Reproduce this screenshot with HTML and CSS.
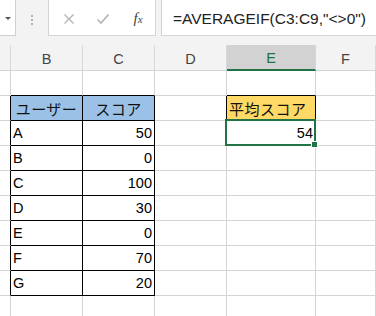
FILE: index.html
```html
<!DOCTYPE html>
<html lang="ja">
  <head>
    <meta charset="UTF-8" />
    <title>AVERAGEIF</title>
    <link rel="stylesheet" href="styles.css">
  </head>
  <body>
    <div class="toolbar">
      <div class="namebox"><span class="caret"></span></div>
      <div class="grip"><span></span><span></span><span></span></div>
      <div class="funcs">
        <svg class="ico" width="12" height="12" viewBox="0 0 12 12">
          <path d="M1.5 1.5 L10.5 10.5 M10.5 1.5 L1.5 10.5" stroke="#b4b4b4" stroke-width="1.4" fill="none" />
        </svg>
        <svg class="ico" width="14" height="12" viewBox="0 0 14 12">
          <path d="M1.5 6.5 L5 10 L12.5 1.5" stroke="#b4b4b4" stroke-width="1.6" fill="none" />
        </svg>
        <span class="fx"><i>f</i><span>x</span></span>
      </div>
      <div class="formula">=AVERAGEIF(C3:C9,"&lt;&gt;0")</div>
    </div>

    <div class="sheet">
      <div class="c hd"></div>
      <div class="c hd">B</div>
      <div class="c hd">C</div>
      <div class="c hd">D</div>
      <div class="c hd on">E</div>
      <div class="c hd">F</div>

      <div class="c"></div>
      <div class="c kb"></div>
      <div class="c kb"></div>
      <div class="c"></div>
      <div class="c kb"></div>
      <div class="c"></div>

      <div class="c kr"></div>
      <div class="c kr kb blue jp mid">ユーザー</div>
      <div class="c kr kb blue jp mid">スコア</div>
      <div class="c kr"></div>
      <div class="c kr kb yellow jp">平均スコア</div>
      <div class="c"></div>

      <div class="c kr"></div>
      <div class="c kr kb">A</div>
      <div class="c kr kb num">50</div>
      <div class="c"></div>
      <div class="c num sel">54</div>
      <div class="c"></div>

      <div class="c kr"></div>
      <div class="c kr kb">B</div>
      <div class="c kr kb num">0</div>
      <div class="c"></div>
      <div class="c"></div>
      <div class="c"></div>

      <div class="c kr"></div>
      <div class="c kr kb">C</div>
      <div class="c kr kb num">100</div>
      <div class="c"></div>
      <div class="c"></div>
      <div class="c"></div>

      <div class="c kr"></div>
      <div class="c kr kb">D</div>
      <div class="c kr kb num">30</div>
      <div class="c"></div>
      <div class="c"></div>
      <div class="c"></div>

      <div class="c kr"></div>
      <div class="c kr kb">E</div>
      <div class="c kr kb num">0</div>
      <div class="c"></div>
      <div class="c"></div>
      <div class="c"></div>

      <div class="c kr"></div>
      <div class="c kr kb">F</div>
      <div class="c kr kb num">70</div>
      <div class="c"></div>
      <div class="c"></div>
      <div class="c"></div>

      <div class="c kr"></div>
      <div class="c kr kb">G</div>
      <div class="c kr kb num">20</div>
      <div class="c"></div>
      <div class="c"></div>
      <div class="c"></div>

      <div class="c"></div>
      <div class="c"></div>
      <div class="c"></div>
      <div class="c"></div>
      <div class="c"></div>
      <div class="c"></div>
    </div>
  </body>
</html>
```

FILE: styles.css
```css
body {
  margin: 0;
  font-family: "Liberation Sans", "Noto Sans CJK JP", sans-serif;
  background: #fff;
  color: #000;
  overflow: hidden;
}

/* formula bar */
.toolbar {
  height: 45px;
  background: #f3f3f3;
  display: flex;
  align-items: flex-start;
}
.namebox {
  flex-shrink: 0;
  width: 16px;
  height: 36px;
  box-sizing: border-box;
  background: #fff;
  border-right: 1px solid #d0d0d0;
  border-bottom: 1px solid #d0d0d0;
  display: flex;
  align-items: center;
  justify-content: center;
}
.caret {
  width: 0;
  height: 0;
  border-left: 3px solid transparent;
  border-right: 3px solid transparent;
  border-top: 3px solid #555;
  margin-top: 2px;
}
.grip {
  flex-shrink: 0;
  width: 32px;
  height: 36px;
  display: flex;
  flex-direction: column;
  align-items: center;
  justify-content: center;
  gap: 2px;
  padding-top: 4px;
  box-sizing: border-box;
}
.grip span {
  width: 2px;
  height: 2px;
  background: #b0b0b0;
}
.funcs {
  flex-shrink: 0;
  width: 108px;
  height: 36px;
  box-sizing: border-box;
  background: #fff;
  border: 1px solid #d4d4d4;
  border-top: none;
  display: grid;
  grid-template-columns: 36px 32px 34px;
  padding-left: 2px;
  align-items: center;
  justify-items: center;
}
.ico {
  display: block;
  margin-top: 3px;
}
.fx {
  font-family: "Liberation Serif", serif;
  color: #444;
  font-size: 15px;
  margin-top: 2px;
  padding-left: 4px;
}
.fx span {
  font-size: 11px;
  font-style: italic;
}
.formula {
  flex: 1;
  min-width: 0;
  height: 36px;
  box-sizing: border-box;
  margin-left: 5px;
  background: #fff;
  border-left: 1px solid #d4d4d4;
  border-bottom: 1px solid #d4d4d4;
  padding: 3px 0 0 11px;
  display: flex;
  align-items: center;
  font-size: 15.5px;
  color: #222;
  white-space: nowrap;
  overflow: hidden;
}

/* sheet */
.sheet {
  display: grid;
  grid-template-columns: 11px 72px 72px 72px 89px 1fr;
  grid-template-rows: 26px repeat(10, 25px);
}
.c {
  box-sizing: border-box;
  border-right: 1px solid #d4d4d4;
  border-bottom: 1px solid #d4d4d4;
  padding: 0 2px;
  display: flex;
  align-items: center;
  font-size: 14.5px;
  white-space: nowrap;
  overflow: hidden;
}
.hd {
  background: #f3f3f3;
  justify-content: center;
  color: #444;
  border-right-color: #d8d8d8;
  border-bottom-color: #d4d4d4;
  padding-top: 2px;
}
.hd.on {
  background: #d2d2d2;
  color: #217346;
  border-bottom: 2px solid #217346;
}
.jp {
  font-size: 15px;
  letter-spacing: 0.5px;
  color: #111;
}
.mid {
  justify-content: center;
}
.num {
  justify-content: flex-end;
}
.kr {
  border-right-color: #000;
}
.kb {
  border-bottom-color: #000;
}
.blue {
  background: #9bc2e6;
}
.yellow {
  background: #ffd966;
}
.sel {
  position: relative;
  overflow: visible;
}
.sel::after {
  content: "";
  position: absolute;
  top: -2px;
  left: -2px;
  right: -1px;
  bottom: -1px;
  border: 2px solid #217346;
}
.sel::before {
  content: "";
  position: absolute;
  right: -3px;
  bottom: -3px;
  width: 5px;
  height: 5px;
  background: #217346;
  border: 1px solid #fff;
  z-index: 1;
}
```
